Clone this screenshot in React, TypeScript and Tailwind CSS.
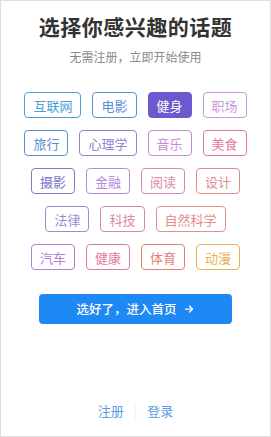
import React, { useState } from 'react';

const topics: { name: string; color: string }[] = [
  { name: '互联网', color: '#4a9fd8' },
  { name: '电影', color: '#5a8fd2' },
  { name: '健身', color: '#6a5acd' },
  { name: '职场', color: '#c99ad8' },
  { name: '旅行', color: '#5a8ed2' },
  { name: '心理学', color: '#8a88d2' },
  { name: '音乐', color: '#c88ad2' },
  { name: '美食', color: '#e27a9c' },
  { name: '摄影', color: '#7c78cc' },
  { name: '金融', color: '#b58ad8' },
  { name: '阅读', color: '#d98aaa' },
  { name: '设计', color: '#e08a92' },
  { name: '法律', color: '#a08ad2' },
  { name: '科技', color: '#d98aa2' },
  { name: '自然科学', color: '#e2908c' },
  { name: '汽车', color: '#b080d2' },
  { name: '健康', color: '#e27a9a' },
  { name: '体育', color: '#e2826e' },
  { name: '动漫', color: '#e8b252' },
];

export default function App() {
  const [selected, setSelected] = useState<string[]>(['健身']);

  const toggle = (name: string) => {
    setSelected((prev) => (prev.includes(name) ? prev.filter((n) => n !== name) : [...prev, name]));
  };

  return (
    <div
      className="w-[271px] h-[437px] bg-white border border-[#dedede] flex flex-col items-center"
      style={{ fontFamily: '"Noto Sans CJK SC", "Noto Sans", sans-serif' }}
    >
      <h1 className="mt-[11px] text-[21px] leading-[28px] font-bold text-[#333333] tracking-[0.5px]">
        选择你感兴趣的话题
      </h1>
      <p className="mt-[9px] text-[12px] leading-[16px] text-[#8a8a8a]">无需注册，立即开始使用</p>

      <div className="mt-[27px] w-[224px] flex flex-wrap justify-center gap-x-[11px] gap-y-[12px]">
        {topics.map((t) => {
          const on = selected.includes(t.name);
          return (
            <button
              key={t.name}
              onClick={() => toggle(t.name)}
              className="h-[26px] px-[8px] rounded-[4px] border-[1.5px] text-[13px] leading-none"
              style={
                on
                  ? { backgroundColor: t.color, borderColor: t.color, color: '#ffffff' }
                  : { borderColor: t.color, color: t.color }
              }
            >
              {t.name}
            </button>
          );
        })}
      </div>

      <button className="mt-[24px] w-[193px] h-[30px] rounded-[4px] bg-[#1e88f5] text-white text-[12.5px] font-medium flex items-center justify-center gap-[6px]">
        选好了，进入首页
        <svg width="12" height="12" viewBox="0 0 24 24" fill="none" stroke="currentColor" strokeWidth="2.5" strokeLinecap="round" strokeLinejoin="round">
          <path d="M5 12h14" />
          <path d="M13 6l6 6-6 6" />
        </svg>
      </button>

      <div className="mt-auto mb-[15px] flex items-center gap-[10px] text-[13px] leading-[20px] text-[#5b9be0]">
        <a href="#">注册</a>
        <span className="text-[#eeeeee]">|</span>
        <a href="#">登录</a>
      </div>
    </div>
  );
}
